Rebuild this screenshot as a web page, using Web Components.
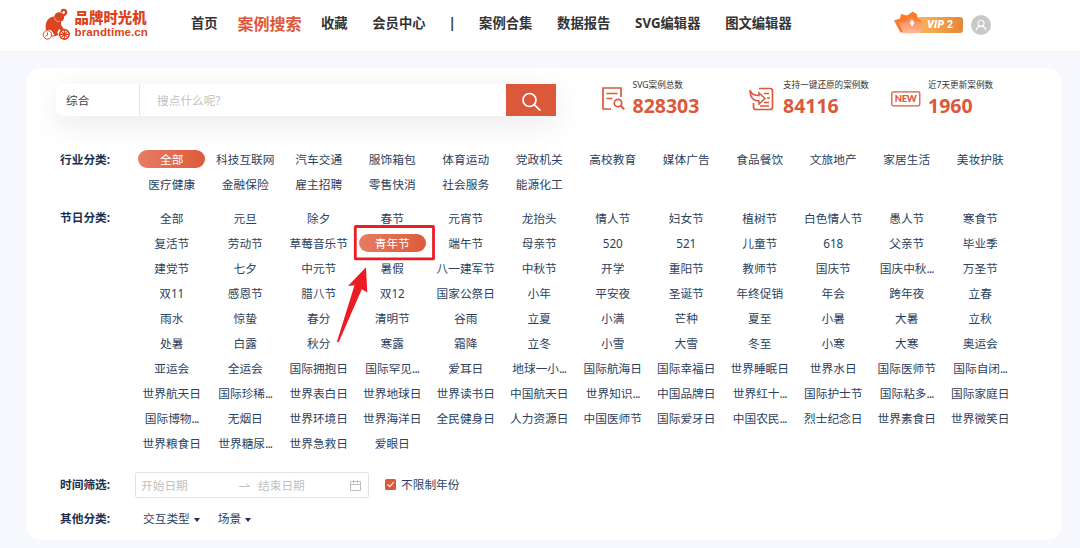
<!DOCTYPE html>
<html lang="zh-CN">
  <head>
    <meta charset="utf-8">
    <title>品牌时光机</title>
    <style>
      :root {
        --brand: #db583b;
        --ink: #2c3f5e;
        --muted: #bfbfbf;
      }

      body {
        margin: 0;
        height: 548px;
        overflow: hidden;
        background: #f7f8fd;
        color: var(--ink);
        font: 11.7px/1 'Noto Sans', 'Noto Sans CJK SC', sans-serif;
      }
    </style>
  </head>
  <body>
    <template id="headerTemplate">
      <style>
        :host {
          display: flex;
          box-sizing: border-box;
          height: 51px;
          padding: 0 89px 4px 42px;
          align-items: center;
          background: #fff;
        }
        nav {
          display: flex;
          flex: 1;
          align-items: center;
          margin-left: 43px;
          padding-top: 1px;
        }
        .user {
          display: flex;
          align-items: center;
          gap: 8px;
          padding-top: 2px;
        }
      </style>
      <brand-logo></brand-logo>
      <nav><slot></slot></nav>
      <div class="user">
        <vip-badge level="2"></vip-badge>
        <svg width="20" height="20" viewBox="0 0 20 20" fill="none" stroke="#fff" stroke-width="1.1">
          <circle cx="10" cy="10" r="10" fill="#c8c8c8" stroke="none" />
          <circle cx="10" cy="8.2" r="3" />
          <path d="M5.2 15.4c.3-2.8 2.2-4.3 4.8-4.3s4.5 1.5 4.8 4.3" />
        </svg>
      </div>
    </template>

    <template id="logoTemplate">
      <style>
        :host {
          display: flex;
          gap: 3px;
          width: 106px;
          height: 38px;
          color: #dc4320;
        }
        .words {
          padding-top: 3px;
          white-space: nowrap;
        }
        .cn {
          font: 900 14.4px/17px 'Noto Sans CJK SC', sans-serif;
        }
        .en {
          font: bold 11.6px/14px 'Liberation Sans', sans-serif;
          letter-spacing: 0.05px;
        }
      </style>
      <svg width="30" height="38" viewBox="0 0 30 38" fill="currentColor">
        <path d="M4 25.500C2.500 17 6.500 11.500 13 11.500c5 1 7 5 6.500 9l3 4-2.200 2-3-2.500-1.800 3.500 1.500 3-4 .5-3-5c-1.500-1.200-3.500-1.500-6-.5z" />
        <circle cx="17.500" cy="12" r="5" />
        <path d="M20.500 10.500c3.500-.3 5-3.200 3.500-5-1.300-1.500-3.800-.9-4 .6" fill="none" stroke="currentColor" stroke-width="2.300" stroke-linecap="round" />
        <path d="M12.700 12.500c.3 3 2.500 4.500 5.300 4" fill="none" stroke="#fff" stroke-width=".6" />
        <g fill="none" stroke="currentColor">
          <circle cx="5.500" cy="30" r="4.300" stroke-width="1" />
          <path d="M5.500 27.500v2.800l-2 1.200M9.500 31.500l5-1" />
          <circle cx="22.700" cy="29.500" r="4.800" stroke-width="1.700" />
          <path d="M22.700 25v9M18 29.500h9M19.700 26.500l6 6M25.700 26.500l-6 6" stroke-width="1.100" />
        </g>
      </svg>
      <div class="words">
        <div class="cn">品牌时光机</div>
        <div class="en">brandtime.cn</div>
      </div>
    </template>

    <template id="vipTemplate">
      <style>
        :host {
          display: flex;
          align-items: center;
        }
        svg {
          margin: -4px -11px 0 0;
          z-index: 1;
        }
        .tag {
          box-sizing: border-box;
          width: 49px;
          height: 16px;
          padding-left: 13px;
          border-radius: 3px;
          background: linear-gradient(90deg, #fbb95a, #e4873b);
          color: #fff;
          font: bold 10.5px/16px Roboto, sans-serif;
          white-space: nowrap;
        }
        i {
          font-weight: 900;
          letter-spacing: 0.3px;
        }
      </style>
      <svg width="31" height="24" viewBox="0 0 31 24">
        <defs>
          <linearGradient id="crown" x1="0" y1="0" x2="0" y2="1">
            <stop offset="0" stop-color="#fb8148" />
            <stop offset="1" stop-color="#ffb998" />
          </linearGradient>
          <filter id="glow" x="-30%" y="-30%" width="160%" height="160%">
            <feGaussianBlur stdDeviation="1.500" />
          </filter>
        </defs>
        <path d="M3 11l20-3-2 14H8z" fill="#ffb795" filter="url(#glow)" opacity=".7" />
        <path d="M0 9.500l6-2 1-4.500 6 1.500L19 .5l4 3 .5 4 4 2-4 10-17 2z" fill="#fb7a2b" />
        <path d="M5 11l6 0 6-5.500 5 4.500 7 1-3 11H9z" fill="url(#crown)" />
        <path d="M18 8.500l2.300 3.500-2.300 3.500-2.300-3.500z" fill="#fff" />
      </svg>
      <div class="tag"><i>VIP</i> <span></span></div>
    </template>

    <template id="navTemplate">
      <style>
        :host {
          margin-right: 24.8px;
          color: #333;
          font-size: 13.3px;
          font-weight: bold;
          white-space: nowrap;
        }
        :host([active]) {
          margin: 0 19.5px 0 -5px;
          color: var(--brand);
          font-size: 16px;
        }
        :host([divider]) {
          margin: 0 23.2px 0 -1.7px;
        }
      </style>
      <slot></slot>
    </template>

    <template id="searchTemplate">
      <style>
        :host {
          display: flex;
          width: 500px;
          height: 32px;
          border-radius: 8px 0 0 8px;
          background: #fff;
          box-shadow: 0 8px 32px rgba(0, 0, 0, 0.09);
          line-height: 33px;
        }
        .type {
          box-sizing: border-box;
          width: 84px;
          padding-left: 10px;
          border-right: 1px solid #e6e6e6;
          color: #444;
        }
        .input {
          flex: 1;
          padding-left: 17px;
          color: var(--muted);
        }
        .go {
          display: flex;
          width: 50px;
          align-items: center;
          justify-content: center;
          background: var(--brand);
        }
        .go svg {
          margin: 5px 0 0 -1px;
        }
      </style>
      <div class="type"><slot name="type"></slot></div>
      <div class="input"><slot></slot></div>
      <div class="go">
        <svg width="20" height="20" viewBox="0 0 20 20" fill="none" stroke="#fff" stroke-width="1.700" stroke-linecap="round">
          <circle cx="8.500" cy="8" r="6.500" />
          <path d="M13.300 12.700l5.500 5.500" />
        </svg>
      </div>
    </template>

    <template id="statTemplate">
      <style>
        :host {
          display: flex;
          color: #333;
          white-space: nowrap;
        }
        .icon {
          display: flex;
          width: 30.5px;
          align-items: center;
          color: var(--brand);
        }
        :host([wide]) .icon {
          width: var(--icon-width, 36px);
        }
        .label {
          font-size: 8.6px;
          line-height: 12px;
        }
        .value {
          color: var(--brand);
          font-size: 19.5px;
          font-weight: bold;
          line-height: 30px;
        }
      </style>
      <div class="icon"><slot name="icon"></slot></div>
      <div>
        <div class="label"></div>
        <div class="value"></div>
      </div>
    </template>

    <template id="rowTemplate">
      <style>
        :host {
          display: flex;
        }
        .label {
          width: 75px;
          flex: none;
          color: #1d2f4f;
          font-weight: bold;
          line-height: 25px;
        }
        .body {
          display: flex;
          flex: 1;
          align-items: center;
        }
      </style>
      <div class="label"></div>
      <div class="body"><slot></slot></div>
    </template>

    <template id="tagsTemplate">
      <style>
        :host {
          display: grid;
          grid-template-columns: repeat(12, 73.5px);
          grid-auto-rows: 25.06px;
          align-items: center;
          justify-items: center;
        }
        span {
          width: 67px;
          height: 18px;
          border-radius: 9px;
          line-height: 18px;
          text-align: center;
          white-space: nowrap;
        }
        .active {
          background: linear-gradient(100deg, #e67d63, #dd5a3a);
          color: #fff;
        }
        small {
          font-size: inherit;
          letter-spacing: -0.75px;
        }
      </style>
    </template>

    <template id="dateTemplate">
      <style>
        :host {
          display: flex;
          box-sizing: border-box;
          width: 234px;
          height: 26px;
          padding: 0 6px 0 5px;
          border: 1px solid #e2e2e2;
          border-radius: 2px;
          align-items: center;
          color: var(--muted);
          line-height: 26px;
        }
        .from {
          width: 98px;
        }
        .to {
          flex: 1;
          padding-left: 8px;
        }
      </style>
      <span class="from">开始日期</span>
      <svg width="11" height="6" viewBox="0 0 11 6" fill="none" stroke="currentColor">
        <path d="M0 4.500h10.500L7 1.500" />
      </svg>
      <span class="to">结束日期</span>
      <svg width="12" height="11" viewBox="0 0 12 11" fill="none" stroke="currentColor">
        <path d="M.5 1.500h10v9H.5zM.5 4.500h10M3.500 0v3M7.500 0v3" />
      </svg>
    </template>

    <template id="checkTemplate">
      <style>
        :host {
          display: flex;
          align-items: center;
          gap: 5px;
        }
      </style>
      <svg width="11" height="11" viewBox="0 0 11 11">
        <rect width="11" height="11" rx="1.500" fill="#db583b" />
        <path d="M2.500 5.300l2.300 2.400 4-4.700" fill="none" stroke="#fff" stroke-width="1.100" />
      </svg>
      <slot></slot>
    </template>

    <template id="dropTemplate">
      <style>
        :host {
          display: flex;
          align-items: center;
          margin-right: 18px;
        }
        i {
          margin: 2px 0 0 4px;
          border: 3.5px solid transparent;
          border-top: 4px solid #1d2f4f;
          border-bottom: 0;
        }
      </style>
      <slot></slot><i></i>
    </template>

    <template id="pointerTemplate">
      <style>
        :host {
          position: absolute;
          left: 330px;
          top: 220px;
        }
        svg {
          display: block;
        }
      </style>
      <svg width="110" height="130" viewBox="330 220 110 130">
        <rect x="355.300" y="226.500" width="78.200" height="32.400" rx=".5" fill="none" stroke="#ed1c24" stroke-width="2.800" />
        <path d="M366 267.200L348 286l6.500-.7L337 341.500q.8 1.200 1.900.3L361.800 289.300l5.500 3.200z" fill="#ed1c24" />
      </svg>
    </template>

    <style>
      main {
        box-sizing: border-box;
        width: 1036px;
        height: 472px;
        margin: 16.5px 0 0 26px;
        padding: 11px 0 0 34px;
        border-radius: 14px;
        background: #fff;
      }

      .top {
        display: flex;
        height: 68px;
        margin-left: -4px;
      }

      search-bar {
        margin-top: 5px;
      }

      stat-item {
        height: 40px;
      }

      stat-item:nth-of-type(1) {
        width: 147px;
        margin-left: 46px;
      }

      stat-item:nth-of-type(2) {
        --icon-width: 34px;
        width: 142px;
      }

      stat-item:nth-of-type(3) {
        --icon-width: 37px;
      }

      .festival {
        margin-top: 8.4px;
      }

      .dates {
        margin-top: 17px;
        height: 26px;
      }

      check-box {
        margin: -2px 0 0 16px;
      }

      .others {
        margin-top: 8px;
      }

      .others drop-down:first-of-type {
        margin-left: 8px;
      }
    </style>

    <site-header>
      <nav-item>首页</nav-item>
      <nav-item active>案例搜索</nav-item>
      <nav-item>收藏</nav-item>
      <nav-item>会员中心</nav-item>
      <nav-item divider>|</nav-item>
      <nav-item>案例合集</nav-item>
      <nav-item>数据报告</nav-item>
      <nav-item>SVG编辑器</nav-item>
      <nav-item>图文编辑器</nav-item>
    </site-header>

    <main>
      <div class="top">
        <search-bar><span slot="type">综合</span>搜点什么呢?</search-bar>
        <stat-item label="SVG案例总数" value="828303">
          <svg slot="icon" width="23" height="24" viewBox="0 0 23 24" fill="none" stroke="currentColor" stroke-width="1.700">
            <path d="M9 22H1V1h18v9M4.500 6.500h11M4.500 11.500h6" />
            <circle cx="16" cy="16" r="3.700" />
            <path d="M18.700 18.700l3.500 3.500" stroke-width="2" />
          </svg>
        </stat-item>
        <stat-item wide label="支持一键还原的案例数" value="84116">
          <svg slot="icon" width="25" height="24" viewBox="0 0 25 24" fill="none" stroke="currentColor" stroke-width="1.700">
            <path d="M10 1.500h11q2.500 0 2.500 2.500v16q0 2.500-2.500 2.500H7q-2.500 0-2.500-2.500v-4" />
            <path d="M1 3c1 4 4 5.500 9 5.500V6l6 5.500-6 5.500v-3C5 14 1 11 1 3z" stroke-width="1.500" />
            <path d="M15 6.500h5M18 11h3M15 15.500h5M11 19h9" stroke-width="1.400" />
          </svg>
        </stat-item>
        <stat-item wide label="近7天更新案例数" value="1960">
          <svg slot="icon" width="30" height="16" viewBox="0 0 30 16">
            <rect x=".8" y=".8" width="28" height="14" rx="1.500" fill="none" stroke="currentColor" stroke-width="1.300" />
            <text x="14.800" y="11.300" fill="currentColor" font-family="Lato, sans-serif" font-size="9.500" font-weight="900" text-anchor="middle" textLength="22">NEW</text>
          </svg>
        </stat-item>
      </div>

      <filter-row label="行业分类:">
        <tag-grid active="全部">
          全部 科技互联网 汽车交通 服饰箱包 体育运动 党政机关 高校教育 媒体广告 食品餐饮 文旅地产 家居生活 美妆护肤
          医疗健康 金融保险 雇主招聘 零售快消 社会服务 能源化工
        </tag-grid>
      </filter-row>

      <filter-row class="festival" label="节日分类:">
        <tag-grid active="青年节">
          全部 元旦 除夕 春节 元宵节 龙抬头 情人节 妇女节 植树节 白色情人节 愚人节 寒食节
          复活节 劳动节 草莓音乐节 青年节 端午节 母亲节 520 521 儿童节 618 父亲节 毕业季
          建党节 七夕 中元节 暑假 八一建军节 中秋节 开学 重阳节 教师节 国庆节 国庆中秋... 万圣节
          双11 感恩节 腊八节 双12 国家公祭日 小年 平安夜 圣诞节 年终促销 年会 跨年夜 立春
          雨水 惊蛰 春分 清明节 谷雨 立夏 小满 芒种 夏至 小暑 大暑 立秋
          处暑 白露 秋分 寒露 霜降 立冬 小雪 大雪 冬至 小寒 大寒 奥运会
          亚运会 全运会 国际拥抱日 国际罕见... 爱耳日 地球一小... 国际航海日 国际幸福日 世界睡眠日 世界水日 国际医师节 国际自闭...
          世界航天日 国际珍稀... 世界表白日 世界地球日 世界读书日 中国航天日 世界知识... 中国品牌日 世界红十... 国际护士节 国际粘多... 国际家庭日
          国际博物... 无烟日 世界环境日 世界海洋日 全民健身日 人力资源日 中国医师节 国际爱牙日 中国农民... 烈士纪念日 世界素食日 世界微笑日
          世界粮食日 世界糖尿... 世界急救日 爱眼日
        </tag-grid>
      </filter-row>

      <filter-row class="dates" label="时间筛选:">
        <date-range></date-range>
        <check-box>不限制年份</check-box>
      </filter-row>

      <filter-row class="others" label="其他分类:">
        <drop-down>交互类型</drop-down>
        <drop-down>场景</drop-down>
      </filter-row>
    </main>

    <red-pointer></red-pointer>

    <script>
      class BaseElement extends HTMLElement {
        constructor() {
          super();
          this.attachShadow({ mode: 'open' });
          this.shadowRoot.append(
            document
              .getElementById(this.constructor.template)
              .content.cloneNode(true)
          );
        }

        setText(selector, attribute) {
          this.shadowRoot.querySelector(selector).textContent =
            this.getAttribute(attribute);
        }
      }

      class SiteHeader extends BaseElement {
        static template = 'headerTemplate';
      }

      class BrandLogo extends BaseElement {
        static template = 'logoTemplate';
      }

      class VipBadge extends BaseElement {
        static template = 'vipTemplate';
        connectedCallback() {
          this.setText('span', 'level');
        }
      }

      class NavItem extends BaseElement {
        static template = 'navTemplate';
      }

      class SearchBar extends BaseElement {
        static template = 'searchTemplate';
      }

      class StatItem extends BaseElement {
        static template = 'statTemplate';
        connectedCallback() {
          this.setText('.label', 'label');
          this.setText('.value', 'value');
        }
      }

      class FilterRow extends BaseElement {
        static template = 'rowTemplate';
        connectedCallback() {
          this.setText('.label', 'label');
        }
      }

      // The names come in as one whitespace separated list
      class TagGrid extends BaseElement {
        static template = 'tagsTemplate';
        connectedCallback() {
          for (const name of this.textContent.trim().split(/\s+/)) {
            const tag = document.createElement('span');
            tag.textContent = name.replace('...', '');
            if (name.endsWith('...')) {
              const dots = document.createElement('small');
              dots.textContent = '...';
              tag.append(dots);
            }
            tag.classList.toggle('active', name === this.getAttribute('active'));
            this.shadowRoot.append(tag);
          }
          this.textContent = '';
        }
      }

      class DateRange extends BaseElement {
        static template = 'dateTemplate';
      }

      class CheckBox extends BaseElement {
        static template = 'checkTemplate';
      }

      class DropDown extends BaseElement {
        static template = 'dropTemplate';
      }

      class RedPointer extends BaseElement {
        static template = 'pointerTemplate';
      }

      customElements.define('brand-logo', BrandLogo);
      customElements.define('vip-badge', VipBadge);
      customElements.define('site-header', SiteHeader);
      customElements.define('nav-item', NavItem);
      customElements.define('search-bar', SearchBar);
      customElements.define('stat-item', StatItem);
      customElements.define('filter-row', FilterRow);
      customElements.define('tag-grid', TagGrid);
      customElements.define('date-range', DateRange);
      customElements.define('check-box', CheckBox);
      customElements.define('drop-down', DropDown);
      customElements.define('red-pointer', RedPointer);
    </script>
  </body>
</html>
